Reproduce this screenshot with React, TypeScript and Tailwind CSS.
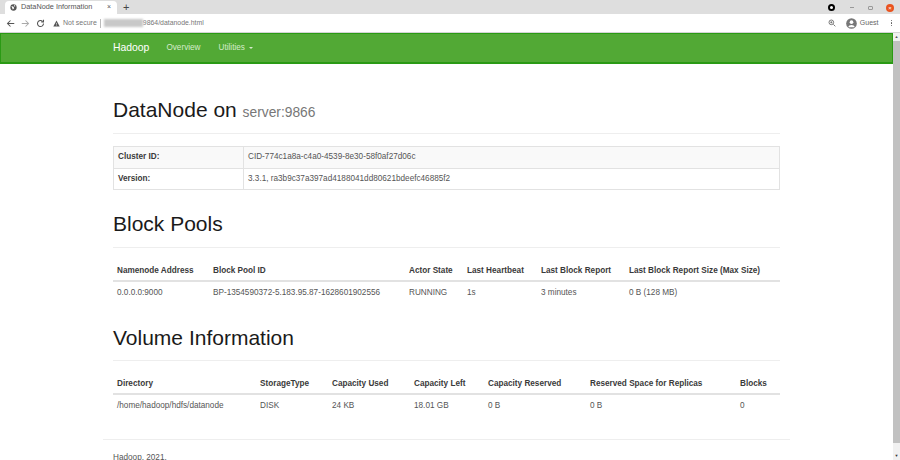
import React from "react";

const font = "font-['Liberation_Sans',Arial,sans-serif]";

function DataTable({ cols, head, row }: { cols: number[]; head: string[]; row: string[] }) {
  return (
    <table className="w-[667px] table-fixed border-collapse text-[8.2px] leading-[12px] text-[#555555]">
      <colgroup>
        {cols.map((c, i) => (
          <col key={i} style={{ width: c }} />
        ))}
      </colgroup>
      <thead>
        <tr className="h-[19px] border-b-2 border-[#e2e2e2]">
          {head.map((h) => (
            <th key={h} className="px-1 text-left font-bold text-[#3a3a3a] whitespace-nowrap">{h}</th>
          ))}
        </tr>
      </thead>
      <tbody>
        <tr className="h-[22px]">
          {row.map((c, i) => (
            <td key={i} className="px-1 whitespace-nowrap">{c}</td>
          ))}
        </tr>
      </tbody>
    </table>
  );
}

function Heading({ children, pad }: { children: React.ReactNode; pad: string }) {
  return (
    <div className={`mx-[10px] border-b border-[#eeeeee] text-[21px] leading-[26px] text-[#1a1a1a] ${pad}`}>{children}</div>
  );
}

export default function App() {
  return (
    <div className={`${font} flex h-[460px] w-[900px] flex-col overflow-hidden bg-white`}>
      <div className="flex h-[14px] items-end bg-[#dedede] pl-[5px]">
        <div className="flex h-[13px] w-[112px] items-center rounded-t-[4px] bg-white pl-[5px] pr-[6px]">
          <svg width="7" height="7" viewBox="0 0 10 10" className="mr-[4px]">
            <circle cx="5" cy="5" r="4.5" fill="#555" />
            <path d="M2 3l3 1 1 2-2 2zM6 1l2 2-2 1z" fill="#fff" />
          </svg>
          <span className="flex-1 whitespace-nowrap text-[7.3px] text-[#555]">DataNode Information</span>
          <span className="text-[7px] text-[#555]">×</span>
        </div>
        <span className="mb-[1px] ml-[6px] text-[11px] leading-[12px] text-[#444]">+</span>
        <div className="ml-auto flex h-[13px] items-center">
          <span className="mr-[15px] h-[7px] w-[7px] rounded-full border-[2px] border-black bg-white" />
          <span className="mr-[14px] h-px w-[4px] bg-[#999]" />
          <span className="mr-[13px] h-[4px] w-[5px] rounded-[1px] border border-[#999]" />
          <span className="mr-[6px] flex h-[8px] w-[8px] items-center justify-center rounded-full bg-[#e95420] text-[6px] leading-none text-white">×</span>
        </div>
      </div>
      <div className="flex h-[19px] items-center border-b border-[#d4d4d4] bg-white pl-[6px] pr-[8px]">
        <svg width="9" height="9" viewBox="0 0 12 12" fill="none" stroke="#555" strokeWidth="1.4" className="mr-[6px]"><path d="M11 6H2M6 2L2 6l4 4" /></svg>
        <svg width="9" height="9" viewBox="0 0 12 12" fill="none" stroke="#aaa" strokeWidth="1.4" className="mr-[6px]"><path d="M1 6h9M6 2l4 4-4 4" /></svg>
        <svg width="9" height="9" viewBox="0 0 12 12" fill="none" stroke="#555" strokeWidth="1.4" className="mr-[8px]"><path d="M10 6a4 4 0 1 1-1.2-2.8M10 1v3H7" /></svg>
        <svg width="7" height="7" viewBox="0 0 12 12" className="mr-[3px]"><path d="M6 1l5.5 10H.5z" fill="#555" /><path d="M6 5v3M6 9v1" stroke="#fff" /></svg>
        <span className="whitespace-nowrap text-[7px] text-[#777]">Not secure</span>
        <span className="mx-[3px] h-[9px] w-px bg-[#bbb]" />
        <span className="h-[8px] w-[39px] bg-[#c8c8c8] blur-[1px]" />
        <span className="whitespace-nowrap text-[6.9px] text-[#777]">9864/datanode.html</span>
        <svg width="8" height="8" viewBox="0 0 12 12" fill="none" stroke="#666" strokeWidth="1.3" className="ml-auto mr-[10px]"><circle cx="5" cy="5" r="3.5" /><path d="M8 8l3 3M3.5 5h3M5 3.5v3" /></svg>
        <div className="mr-[12px] flex h-[12px] items-center">
          <svg width="11" height="11" viewBox="0 0 12 12" className="mr-[3px]"><circle cx="6" cy="6" r="5.8" fill="#777" /><circle cx="6" cy="4.5" r="2" fill="#fff" /><path d="M2.5 10c.5-3 6.5-3 7 0" fill="#fff" /></svg>
          <span className="text-[7px] text-[#666]">Guest</span>
        </div>
        <span className="flex flex-col gap-[1px]">
          <span className="h-[1.5px] w-[1.5px] rounded-full bg-[#555]" />
          <span className="h-[1.5px] w-[1.5px] rounded-full bg-[#555]" />
          <span className="h-[1.5px] w-[1.5px] rounded-full bg-[#555]" />
        </span>
      </div>
      <div className="flex min-h-0 flex-1">
        <div className="min-w-0 flex-1 overflow-hidden">
          <div className="flex h-[31px] items-center border border-b-2 border-[#2a9a14] bg-[#52a935] pl-[112px] text-[8.2px] text-[#d5ebcb]">
            <span className="mr-[17px] text-[10.4px] text-white">Hadoop</span>
            <span className="mr-[18px]">Overview</span>
            <span>Utilities</span>
            <span className="ml-[4px] border-x-[2.5px] border-t-[2.5px] border-x-transparent border-t-[#d5ebcb]" />
          </div>
          <div className="ml-[103px] w-[687px]">
            <div className="pt-[33px]">
              <Heading pad="pb-[7px]">
                DataNode on <span className="text-[13.8px] text-[#777777]">server:9866</span>
              </Heading>
            </div>
            <div className="mx-[10px] mt-[12px]">
              <table className="w-[667px] table-fixed border-collapse border border-[#e2e2e2] text-[8.2px] text-[#555555]">
                <colgroup>
                  <col className="w-[130px]" />
                  <col />
                </colgroup>
                <tbody>
                  <tr className="h-[22px] border-b border-[#e2e2e2]">
                    <th className="border-r border-[#e2e2e2] bg-[#f9f9f9] px-1 text-left font-bold text-[#3a3a3a]">Cluster ID:</th>
                    <td className="bg-[#f9f9f9] px-1">CID-774c1a8a-c4a0-4539-8e30-58f0af27d06c</td>
                  </tr>
                  <tr className="h-[21px]">
                    <th className="border-r border-[#e2e2e2] px-1 text-left font-bold text-[#3a3a3a]">Version:</th>
                    <td className="px-1">3.3.1, ra3b9c37a397ad4188041dd80621bdeefc46885f2</td>
                  </tr>
                </tbody>
              </table>
            </div>
            <div className="pt-[21px]">
              <Heading pad="pb-[10px]">Block Pools</Heading>
            </div>
            <div className="mx-[10px] mt-[14px]">
              <DataTable
                cols={[96, 196, 58, 74, 88, 155]}
                head={["Namenode Address", "Block Pool ID", "Actor State", "Last Heartbeat", "Last Block Report", "Last Block Report Size (Max Size)"]}
                row={["0.0.0.0:9000", "BP-1354590372-5.183.95.87-1628601902556", "RUNNING", "1s", "3 minutes", "0 B (128 MB)"]}
              />
            </div>
            <div className="pt-[22px]">
              <Heading pad="pb-[9px]">Volume Information</Heading>
            </div>
            <div className="mx-[10px] mt-[14px]">
              <DataTable
                cols={[143, 72, 82, 74, 102, 150, 44]}
                head={["Directory", "StorageType", "Capacity Used", "Capacity Left", "Capacity Reserved", "Reserved Space for Replicas", "Blocks"]}
                row={["/home/hadoop/hdfs/datanode", "DISK", "24 KB", "18.01 GB", "0 B", "0 B", "0"]}
              />
            </div>
            <div className="mt-[23px] border-t border-[#eeeeee] pl-[10px] pt-[12px] text-[8.2px] leading-[12px] text-[#555555]">Hadoop, 2021.</div>
          </div>
        </div>
        <div className="flex w-[7px] flex-col bg-[#f1f1f1]">
          <span className="flex h-[8px] items-center justify-center text-[4px] text-[#555]">▲</span>
          <span className="h-[402px] bg-[#c1c1c1]" />
          <span className="mt-auto flex h-[8px] items-center justify-center text-[4px] text-[#333]">▼</span>
        </div>
      </div>
    </div>
  );
}
